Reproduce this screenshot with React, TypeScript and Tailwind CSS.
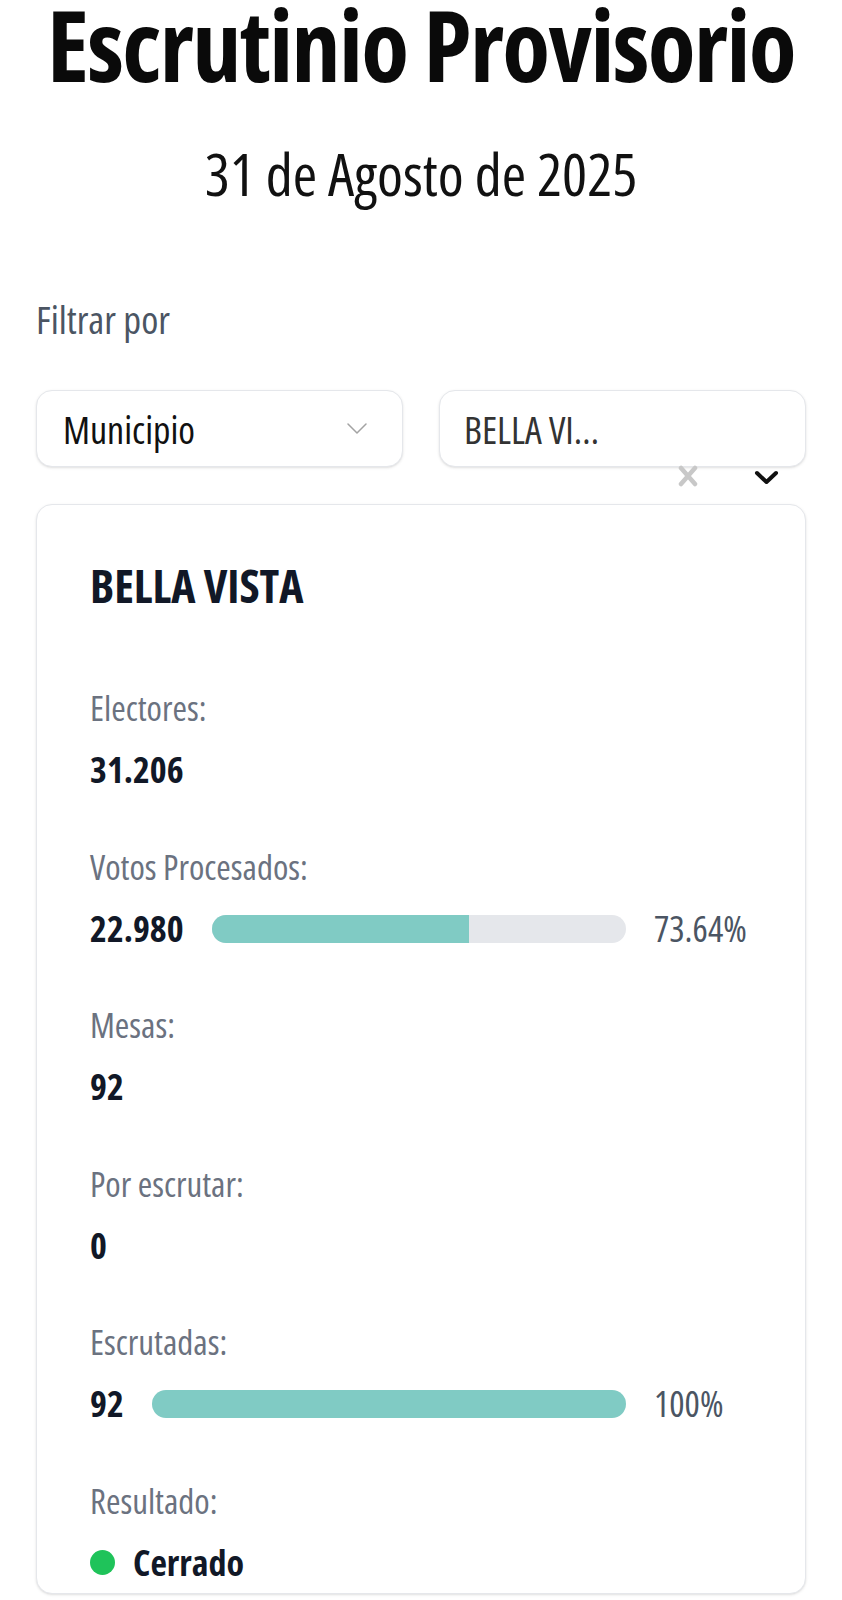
type StatProps = {
  label: string;
  children: React.ReactNode;
};

const Stat: React.FC<StatProps> = ({ label, children }) => {
  return (
    <div className="flex flex-col">
      <span className="text-[35px] leading-none text-[#6b7280]">{label}</span>
      <div className="mt-[27px] flex h-9 items-center">{children}</div>
    </div>
  );
};

type BarRowProps = {
  value: string;
  fill: number;
  percent: string;
};

const BarRow: React.FC<BarRowProps> = ({ value, fill, percent }) => {
  return (
    <div className="flex w-full items-center gap-7">
      <span className="text-[36px] font-bold leading-none text-[#111827]">{value}</span>
      <div className="h-7 flex-1 overflow-hidden rounded-full bg-[#e5e7eb]">
        <div className="h-full bg-[#80cbc4]" style={{ width: `${fill}%` }} />
      </div>
      <span className="w-24 text-[36px] leading-none text-[#4b5563]">{percent}</span>
    </div>
  );
};

export default function App() {
  return (
    <div className="min-h-[1600px] w-full overflow-hidden bg-white font-['Open_Sans',sans-serif] [font-stretch:75%]">
      <h1 className="-mt-[5px] text-center text-[98px] font-bold leading-none tracking-[-1.6px] text-[#0a0a0a]">
        Escrutinio Provisorio
      </h1>
      <p className="mt-[51px] text-center text-[59px] leading-none text-[#111111]">31 de Agosto de 2025</p>

      <div className="px-9">
        <p className="mt-[96px] text-[39px] leading-none text-[#4b5563]">Filtrar por</p>

        <div className="mt-[52px] grid grid-cols-2 gap-9">
          <div className="flex h-[77px] items-center justify-between rounded-2xl border border-[#e5e7eb] bg-white pl-[26px] pr-[35px] shadow-sm">
            <span className="text-[38px] leading-none text-[#111111]">Municipio</span>
            <svg width="20" height="11" viewBox="0 0 20 11" fill="none">
              <path d="M1 1l9 9 9-9" stroke="#a3a3a3" strokeWidth="1.5" strokeLinecap="round" strokeLinejoin="round" />
            </svg>
          </div>
          <div className="relative flex h-[77px] items-center rounded-2xl border border-[#e5e7eb] bg-white pl-6 shadow-sm">
            <span className="text-[38px] leading-none text-[#333333]">BELLA VI…</span>
            <svg className="absolute left-[238px] top-[74px]" width="20" height="22" viewBox="0 0 20 22" fill="none">
              <path d="M3 3l14 16M17 3L3 19" stroke="#c8c8c8" strokeWidth="4.5" strokeLinecap="round" />
            </svg>
            <svg className="absolute left-[314px] top-[79px]" width="25" height="15" viewBox="0 0 25 15" fill="none">
              <path d="M3 3l9.5 9 9.5-9" stroke="#111111" strokeWidth="4" strokeLinecap="round" strokeLinejoin="round" />
            </svg>
          </div>
        </div>

        <div className="mt-[37px] rounded-2xl border border-[#e5e7eb] bg-white pb-[12px] pl-[53px] pr-[55px] pt-[57px] shadow-sm">
          <h2 className="text-[46px] font-bold leading-none text-[#111827]">BELLA VISTA</h2>

          <div className="mt-[82px] flex flex-col gap-[60.5px]">
            <Stat label="Electores:">
              <span className="text-[36px] font-bold leading-none text-[#111827]">31.206</span>
            </Stat>
            <Stat label="Votos Procesados:">
              <BarRow value="22.980" fill={62} percent="73.64%" />
            </Stat>
            <Stat label="Mesas:">
              <span className="text-[36px] font-bold leading-none text-[#111827]">92</span>
            </Stat>
            <Stat label="Por escrutar:">
              <span className="text-[36px] font-bold leading-none text-[#111827]">0</span>
            </Stat>
            <Stat label="Escrutadas:">
              <BarRow value="92" fill={100} percent="100%" />
            </Stat>
            <Stat label="Resultado:">
              <div className="flex items-center gap-[18px]">
                <span className="h-[25px] w-[25px] rounded-full bg-[#1fc35a]" />
                <span className="text-[36px] font-bold leading-none text-[#111827]">Cerrado</span>
              </div>
            </Stat>
          </div>
        </div>
      </div>
    </div>
  );
}
